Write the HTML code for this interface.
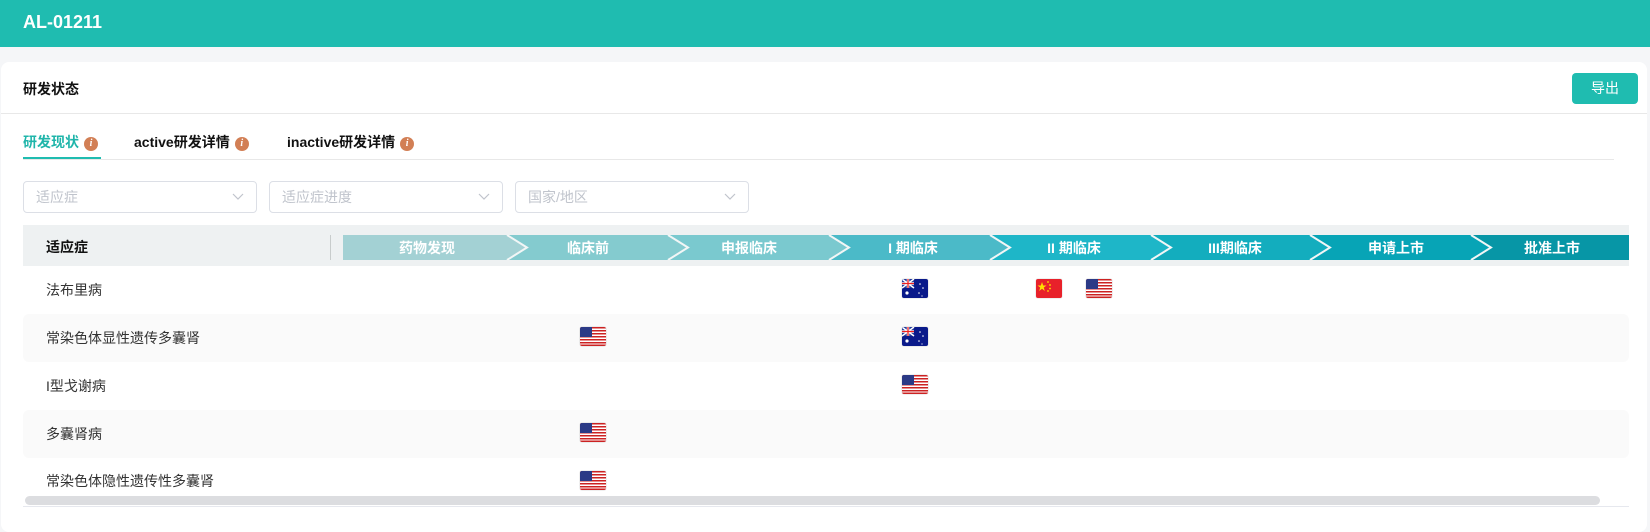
<!DOCTYPE html>
<html><head><meta charset="utf-8"><style>
*{margin:0;padding:0;box-sizing:border-box}
body{width:1650px;height:521px;background:#f5f6f8;font-family:"Liberation Sans","Noto Sans CJK SC",sans-serif;position:relative;overflow:hidden}
.top{position:absolute;left:0;top:0;width:1650px;height:47px;background:#1fbcb0;color:#fff;font-weight:bold;font-size:18px;padding:12px 0 0 23px}
.card{position:absolute;left:1px;top:62px;width:1646px;height:470px;background:#fff;border-radius:8px}
.abs{position:absolute}
.t{font-size:14px;font-weight:bold;color:#111}
.btn{left:1572px;top:73px;width:66px;height:31px;background:#1fbcb0;border-radius:4px;color:#fff;font-size:14px;text-align:center;line-height:31px}
.info{display:inline-block;width:14px;height:14px;border-radius:50%;background:#d27f55;color:#fff;font-size:10px;font-weight:bold;font-style:italic;text-align:center;line-height:14px;font-family:"Liberation Serif",serif;vertical-align:1px;margin-left:5px}
.dd{top:181px;width:234px;height:32px;border:1px solid #dcdfe6;border-radius:4px;color:#c0c4cc;font-size:14px;line-height:30px;padding-left:12px}
.dd svg{position:absolute;right:12px;top:11px}
.row{position:absolute;left:23px;width:1606px;height:48px;font-size:14px;color:#333;line-height:48px;padding-left:23px}
.s{background:#fafafa;border-radius:6px}
.flag{position:absolute;width:26px;height:19px;border-radius:2px;overflow:hidden;box-shadow:0 0 1px #999}
</style></head><body>
<div class="top">AL-01211</div>
<div class="card"></div>
<div class="abs t" style="left:23px;top:79px">研发状态</div>
<div class="abs btn">导出</div>
<div class="abs" style="left:1px;top:113px;width:1646px;height:1px;background:#e8e8e8"></div>
<div class="abs t" style="left:23px;top:132px;color:#1fb5aa">研发现状<span class="info">i</span></div>
<div class="abs t" style="left:134px;top:132px">active研发详情<span class="info">i</span></div>
<div class="abs t" style="left:287px;top:132px">inactive研发详情<span class="info">i</span></div>
<div class="abs" style="left:23px;top:159px;width:1591px;height:1px;background:#e8e8e8"></div>
<div class="abs" style="left:23px;top:157px;width:78px;height:2px;background:#1fbcb0"></div>
<div class="abs dd" style="left:23px">适应症<svg width="12" height="8"><path d="M1 1l5 5 5-5" fill="none" stroke="#c0c4cc" stroke-width="1.2"/></svg></div>
<div class="abs dd" style="left:269px">适应症进度<svg width="12" height="8"><path d="M1 1l5 5 5-5" fill="none" stroke="#c0c4cc" stroke-width="1.2"/></svg></div>
<div class="abs dd" style="left:515px">国家/地区<svg width="12" height="8"><path d="M1 1l5 5 5-5" fill="none" stroke="#c0c4cc" stroke-width="1.2"/></svg></div>

<div class="abs" style="left:23px;top:225px;width:1606px;height:41px;background:#eef1f2"></div>
<div class="abs t" style="left:46px;top:237px;font-size:14px">适应症</div>
<div class="abs" style="left:330px;top:235px;width:1px;height:25px;background:#c8cccc"></div>
<svg class="abs" style="left:343px;top:235px" width="1286" height="25">
<g font-family="Liberation Sans,Noto Sans CJK SC,sans-serif" font-size="14" font-weight="bold" fill="#fff" text-anchor="middle">
<rect x="0" y="0" width="1286" height="25" fill="#0796a6"/>
<polygon points="0,0 164,0 184,12.5 164,25 0,25" fill="#a3d1d4"/>
<polygon points="164,0 325,0 345,12.5 325,25 164,25 184,12.5" fill="#84cbcf"/>
<polygon points="325,0 486,0 506,12.5 486,25 325,25 345,12.5" fill="#7ac9cf"/>
<polygon points="486,0 647,0 667,12.5 647,25 486,25 506,12.5" fill="#4bbac8"/>
<polygon points="647,0 808,0 828,12.5 808,25 647,25 667,12.5" fill="#1eb6c8"/>
<polygon points="808,0 967,0 987,12.5 967,25 808,25 828,12.5" fill="#13adbe"/>
<polygon points="967,0 1128,0 1148,12.5 1128,25 967,25 987,12.5" fill="#07a4b6"/>
<g fill="none" stroke="#f2f6f6" stroke-width="2"><path d="M164 0L184 12.5L164 25M325 0L345 12.5L325 25M486 0L506 12.5L486 25M647 0L667 12.5L647 25M808 0L828 12.5L808 25M967 0L987 12.5L967 25M1128 0L1148 12.5L1128 25"/></g>
<text x="84" y="18">药物发现</text><text x="245" y="18">临床前</text><text x="406" y="18">申报临床</text><text x="570" y="18">I 期临床</text><text x="731" y="18">II 期临床</text><text x="892" y="18">III期临床</text><text x="1053" y="18">申请上市</text><text x="1209" y="18">批准上市</text>
</g></svg>

<div class="row" style="top:266px">法布里病</div>
<div class="row s" style="top:314px">常染色体显性遗传多囊肾</div>
<div class="row" style="top:362px">I型戈谢病</div>
<div class="row s" style="top:410px">多囊肾病</div>
<div class="row" style="top:458px;line-height:46px">常染色体隐性遗传性多囊肾</div>
<div class="abs" style="left:25px;top:496px;width:1575px;height:9px;background:#dcdde0;border-radius:5px"></div>
<div class="abs" style="left:23px;top:506px;width:1606px;height:1px;background:#e6e8ee"></div>

<svg width="0" height="0" style="position:absolute"><defs>
<g id="us"><rect width="26" height="19" fill="#fff"/><g fill="#c22"><rect y="0" width="26" height="1.5"/><rect y="3" width="26" height="1.5"/><rect y="6" width="26" height="1.5"/><rect y="9" width="26" height="1.5"/><rect y="12" width="26" height="1.5"/><rect y="15" width="26" height="1.5"/><rect y="17.5" width="26" height="1.5"/></g><rect width="12" height="10" fill="#2b3a86"/></g>
<g id="au"><rect width="26" height="19" fill="#0a1a8a"/><rect width="12" height="9" fill="#233a9a"/><path d="M0 0L12 9M12 0L0 9" stroke="#fff" stroke-width="1.5"/><path d="M6 0V9M0 4.5H12" stroke="#fff" stroke-width="2.5"/><path d="M6 0V9M0 4.5H12" stroke="#e22" stroke-width="1.3"/><g fill="#fff"><circle cx="5" cy="14" r="1.6"/><circle cx="18" cy="5" r=".8"/><circle cx="21" cy="9" r=".8"/><circle cx="17" cy="14" r=".8"/><circle cx="20" cy="17" r=".6"/></g></g>
<g id="cn"><rect width="26" height="19" fill="#e8212a"/><polygon points="6,3 7.2,6.5 10.5,6.5 7.8,8.5 8.8,12 6,9.8 3.2,12 4.2,8.5 1.5,6.5 4.8,6.5" fill="#ffde00"/><g fill="#ffde00"><circle cx="12" cy="3" r=".9"/><circle cx="14" cy="6" r=".9"/><circle cx="14" cy="9.5" r=".9"/><circle cx="12" cy="12" r=".9"/></g></g>
</defs></svg>
<svg class="flag" style="left:902px;top:279px" width="26" height="19"><use href="#au"/></svg>
<svg class="flag" style="left:1036px;top:279px" width="26" height="19"><use href="#cn"/></svg>
<svg class="flag" style="left:1086px;top:279px" width="26" height="19"><use href="#us"/></svg>
<svg class="flag" style="left:580px;top:327px" width="26" height="19"><use href="#us"/></svg>
<svg class="flag" style="left:902px;top:327px" width="26" height="19"><use href="#au"/></svg>
<svg class="flag" style="left:902px;top:375px" width="26" height="19"><use href="#us"/></svg>
<svg class="flag" style="left:580px;top:423px" width="26" height="19"><use href="#us"/></svg>
<svg class="flag" style="left:580px;top:471px" width="26" height="19"><use href="#us"/></svg>
</body></html>
